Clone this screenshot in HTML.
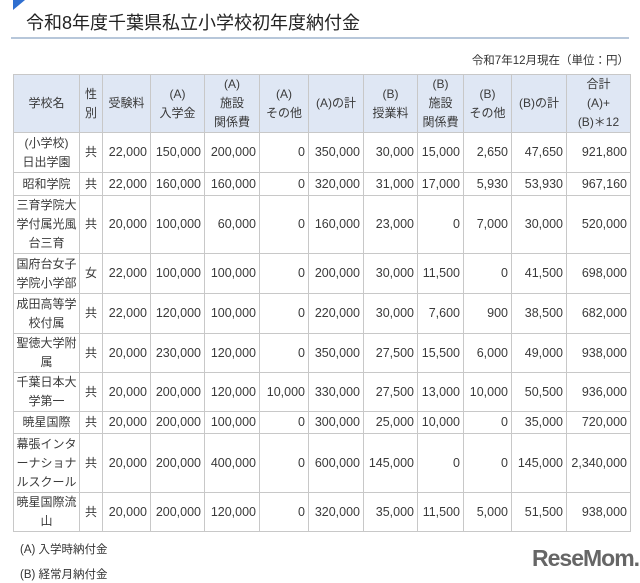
<!DOCTYPE html>
<html><head><meta charset="utf-8"><style>
*{margin:0;padding:0;box-sizing:border-box}
body{width:640px;height:583px;background:#fff;font-family:"Liberation Sans","Noto Sans CJK JP",sans-serif;color:#333;position:relative;overflow:hidden}
.tri{position:absolute;left:13px;top:0;width:0;height:0;border-top:10px solid #2f6fd0;border-right:12px solid transparent}
h1{position:absolute;left:26px;top:9px;font-size:18px;font-weight:normal;color:#222;white-space:nowrap}
.line{position:absolute;left:11px;top:37px;width:618px;height:2px;background:#b7c7da}
.date{position:absolute;right:11px;top:52px;font-size:11.5px;color:#333}
table{position:absolute;left:13px;top:74px;border-collapse:collapse;table-layout:fixed;width:617px}
td,th{border:1px solid #c8c8c8;font-size:12.5px;line-height:19px;padding:0 3px;font-weight:normal;white-space:nowrap;color:#3a3a3a}
th{background:#dfe7f4;text-align:center;font-size:12px}
td{text-align:right}
td.n{text-align:center;white-space:normal;font-size:12px;padding:0 2px}
td.s{text-align:center;font-size:12px}
.foot{position:absolute;left:20px;font-size:11.5px}
.logo{position:absolute;left:532px;top:545px;font-size:23px;font-weight:bold;color:#666;letter-spacing:-1px;font-family:"Liberation Sans",sans-serif;white-space:nowrap}
</style></head><body>
<div class="tri"></div>
<h1>令和8年度千葉県私立小学校初年度納付金</h1>
<div class="line"></div>
<div class="date">令和7年12月現在（単位：円）</div>
<table>
<colgroup><col style="width:66px"><col style="width:23px"><col style="width:48px"><col style="width:54px"><col style="width:55px"><col style="width:49px"><col style="width:55px"><col style="width:54px"><col style="width:46px"><col style="width:48px"><col style="width:55px"><col style="width:64px"></colgroup>
<tr style="height:57px"><th>学校名</th><th>性<br>別</th><th>受験料</th><th>(A)<br>入学金</th><th>(A)<br>施設<br>関係費</th><th>(A)<br>その他</th><th>(A)の計</th><th>(B)<br>授業料</th><th>(B)<br>施設<br>関係費</th><th>(B)<br>その他</th><th>(B)の計</th><th>合計<br>(A)+<br>(B)＊12</th></tr>
<tr style="height:40px"><td class="n">(小学校)<br>日出学園</td><td class="s">共</td><td>22,000</td><td>150,000</td><td>200,000</td><td>0</td><td>350,000</td><td>30,000</td><td>15,000</td><td>2,650</td><td>47,650</td><td>921,800</td></tr>
<tr style="height:23px"><td class="n">昭和学院</td><td class="s">共</td><td>22,000</td><td>160,000</td><td>160,000</td><td>0</td><td>320,000</td><td>31,000</td><td>17,000</td><td>5,930</td><td>53,930</td><td>967,160</td></tr>
<tr style="height:58px"><td class="n">三育学院大学付属光風台三育</td><td class="s">共</td><td>20,000</td><td>100,000</td><td>60,000</td><td>0</td><td>160,000</td><td>23,000</td><td>0</td><td>7,000</td><td>30,000</td><td>520,000</td></tr>
<tr style="height:40px"><td class="n">国府台女子学院小学部</td><td class="s">女</td><td>22,000</td><td>100,000</td><td>100,000</td><td>0</td><td>200,000</td><td>30,000</td><td>11,500</td><td>0</td><td>41,500</td><td>698,000</td></tr>
<tr style="height:40px"><td class="n">成田高等学校付属</td><td class="s">共</td><td>22,000</td><td>120,000</td><td>100,000</td><td>0</td><td>220,000</td><td>30,000</td><td>7,600</td><td>900</td><td>38,500</td><td>682,000</td></tr>
<tr style="height:39px"><td class="n">聖徳大学附属</td><td class="s">共</td><td>20,000</td><td>230,000</td><td>120,000</td><td>0</td><td>350,000</td><td>27,500</td><td>15,500</td><td>6,000</td><td>49,000</td><td>938,000</td></tr>
<tr style="height:39px"><td class="n">千葉日本大学第一</td><td class="s">共</td><td>20,000</td><td>200,000</td><td>120,000</td><td>10,000</td><td>330,000</td><td>27,500</td><td>13,000</td><td>10,000</td><td>50,500</td><td>936,000</td></tr>
<tr style="height:22px"><td class="n">暁星国際</td><td class="s">共</td><td>20,000</td><td>200,000</td><td>100,000</td><td>0</td><td>300,000</td><td>25,000</td><td>10,000</td><td>0</td><td>35,000</td><td>720,000</td></tr>
<tr style="height:59px"><td class="n">幕張インターナショナルスクール</td><td class="s">共</td><td>20,000</td><td>200,000</td><td>400,000</td><td>0</td><td>600,000</td><td>145,000</td><td>0</td><td>0</td><td>145,000</td><td>2,340,000</td></tr>
<tr style="height:37px"><td class="n">暁星国際流山</td><td class="s">共</td><td>20,000</td><td>200,000</td><td>120,000</td><td>0</td><td>320,000</td><td>35,000</td><td>11,500</td><td>5,000</td><td>51,500</td><td>938,000</td></tr>
</table>
<div class="foot" style="top:541px">(A) 入学時納付金</div>
<div class="foot" style="top:566px">(B) 経常月納付金</div>
<div class="logo">ReseMom.</div>
</body></html>
